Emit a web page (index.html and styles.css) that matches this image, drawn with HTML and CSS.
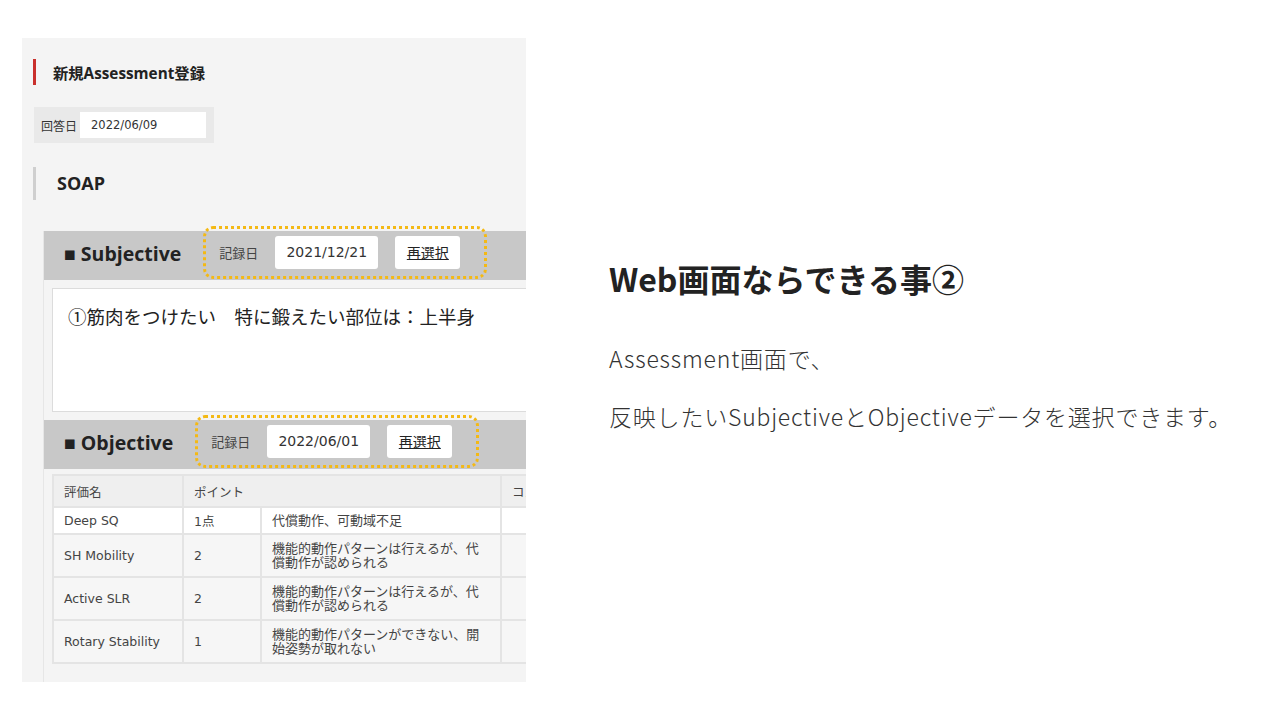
FILE: index.html
```html
<!DOCTYPE html>
<html lang="ja">
<head>
  <meta charset="UTF-8">
  <title>Web画面ならできる事②</title>
  <link rel="stylesheet" href="styles.css">
</head>
<body>

  <!-- Screenshot of the assessment form -->
  <div class="shot">
    <div class="page-title">
      <span class="title-bar"></span>
      <span class="title-text">新規Assessment登録</span>
    </div>

    <div class="answer-date">
      <span class="answer-label">回答日</span>
      <span class="answer-input">2022/06/09</span>
    </div>

    <div class="soap-title">SOAP</div>

    <div class="soap-body">
      <!-- Subjective -->
      <div class="section-head">
        <div class="section-name">■ Subjective</div>
        <div class="pick-box">
          <span class="pick-label">記録日</span>
          <span class="pick-input">2021/12/21</span>
          <span class="pick-button">再選択</span>
        </div>
      </div>
      <div class="subjective-text">①筋肉をつけたい　特に鍛えたい部位は：上半身</div>

      <!-- Objective -->
      <div class="section-head">
        <div class="section-name">■ Objective</div>
        <div class="pick-box">
          <span class="pick-label">記録日</span>
          <span class="pick-input">2022/06/01</span>
          <span class="pick-button">再選択</span>
        </div>
      </div>
      <table class="eval-table">
        <tr class="head-row">
          <td class="col-name">評価名</td>
          <td colspan="2">ポイント</td>
          <td class="col-note">コメント</td>
        </tr>
        <tr class="row-short">
          <td>Deep SQ</td>
          <td class="col-point">1点</td>
          <td class="col-desc">代償動作、可動域不足</td>
          <td></td>
        </tr>
        <tr class="row-gray">
          <td>SH Mobility</td>
          <td>2</td>
          <td class="col-desc">機能的動作パターンは行えるが、代償動作が認められる</td>
          <td></td>
        </tr>
        <tr class="row-gray">
          <td>Active SLR</td>
          <td>2</td>
          <td class="col-desc">機能的動作パターンは行えるが、代償動作が認められる</td>
          <td></td>
        </tr>
        <tr class="row-gray">
          <td>Rotary Stability</td>
          <td>1</td>
          <td class="col-desc">機能的動作パターンができない、開始姿勢が取れない</td>
          <td></td>
        </tr>
      </table>
    </div>
  </div>

  <!-- Slide text -->
  <div class="slide-text">
    <h1>Web画面ならできる事②</h1>
    <p>Assessment画面で、</p>
    <p>反映したいSubjectiveとObjectiveデータを選択できます。</p>
  </div>

</body>
</html>
```

FILE: styles.css
```css
/* Slide canvas */
body {
  margin: 0;
  width: 1280px;
  height: 720px;
  background-color: white;
  color: #222;
  font-family: "Noto Sans CJK JP", sans-serif;
  display: flex;
  align-items: flex-start;
  overflow: hidden;
}

/* Screenshot panel */
.shot {
  margin: 38px 0 0 22px;
  width: 504px;
  height: 644px;
  background-color: #f4f4f4;
  overflow: hidden;
  flex-shrink: 0;
  color: #333;
  font-family: "DejaVu Sans", "Noto Sans CJK JP", sans-serif;
}

/* Page title with red bar */
.page-title {
  display: flex;
  align-items: center;
  margin: 21px 0 0 11px;
  height: 26px;
}

.title-bar {
  width: 3px;
  height: 26px;
  background-color: #c9302c;
}

.title-text {
  margin-left: 17px;
  font-family: "Open Sans", "Noto Sans CJK JP", sans-serif;
  font-size: 15.3px;
  font-weight: bold;
  color: #222;
}

/* Answer date */
.answer-date {
  display: flex;
  align-items: center;
  margin: 22px 0 0 12px;
  width: 180px;
  height: 36px;
  padding: 0 8px 0 7px;
  box-sizing: border-box;
  background-color: #e9e9e9;
}

.answer-label {
  font-family: "Noto Sans CJK JP", sans-serif;
  font-size: 12px;
  color: #333;
}

.answer-input {
  margin-left: 3px;
  width: 126px;
  height: 26px;
  line-height: 26px;
  padding-left: 11px;
  box-sizing: border-box;
  background-color: white;
  font-size: 11.5px;
}

/* SOAP heading */
.soap-title {
  margin: 24px 0 0 11px;
  height: 33px;
  line-height: 33px;
  border-left: 3px solid #cfcfcf;
  padding-left: 21px;
  font-family: "Open Sans", sans-serif;
  font-size: 18px;
  font-weight: bold;
  color: #222;
}

/* SOAP body */
.soap-body {
  margin: 31px 0 0 21px;
  width: 720px;
  min-height: 460px;
  border-left: 1px solid #e6e6e6;
}

.section-head {
  display: flex;
  align-items: flex-start;
  height: 49px;
  background-color: #c8c8c8;
}

.section-name {
  padding-left: 20px;
  line-height: 46px;
  font-family: "Open Sans", sans-serif;
  font-size: 19.5px;
  font-weight: bold;
  color: #222;
}

.pick-box {
  display: flex;
  align-items: center;
  margin: -5px 0 0 22px;
  width: 284px;
  height: 53px;
  padding-left: 13px;
  box-sizing: border-box;
  border: 3px dotted #f4b914;
  border-radius: 10px;
}

.pick-label {
  font-family: "Noto Sans CJK JP", sans-serif;
  font-size: 13px;
  color: #444;
}

.pick-input {
  margin-left: 17px;
  width: 103px;
  height: 33px;
  line-height: 33px;
  text-align: center;
  background-color: white;
  border-radius: 3px;
  font-size: 14px;
  color: #333;
}

.pick-button {
  margin-left: 17px;
  width: 65px;
  height: 33px;
  line-height: 33px;
  text-align: center;
  background-color: white;
  border-radius: 3px;
  font-family: "Noto Sans CJK JP", sans-serif;
  font-size: 14px;
  text-decoration: underline;
  color: #222;
}

.subjective-text {
  margin: 8px 0 8px 8px;
  height: 124px;
  padding: 14px 15px;
  box-sizing: border-box;
  background-color: white;
  border: 1px solid #dcdcdc;
  font-family: "Noto Sans CJK JP", sans-serif;
  font-size: 18.5px;
  color: #222;
}

/* Objective table */
.eval-table {
  margin: 5px 0 0 8px;
  border-collapse: collapse;
  font-size: 12.5px;
  color: #444;
}

.eval-table td {
  border: 2px solid #e4e4e4;
  padding: 0 10px;
  vertical-align: middle;
}

.head-row td {
  height: 30px;
  background-color: #efefef;
}

.row-short td {
  height: 25px;
  background-color: white;
}

.row-gray td {
  height: 41px;
  background-color: #f6f6f6;
}

.col-name {
  width: 108px;
}

.col-point {
  width: 56px;
}

.col-desc {
  width: 218px;
  font-size: 13px;
  line-height: 14px;
}

.col-note {
  width: 150px;
}

/* Slide text on the right */
.slide-text {
  margin: 257px 0 0 83px;
}

.slide-text h1 {
  margin: 0;
  font-size: 32px;
  line-height: 42px;
  font-weight: bold;
  color: #222;
}

.slide-text p {
  margin: 45px 0 0;
  font-size: 23px;
  line-height: 28px;
  font-weight: 300;
  letter-spacing: 0.8px;
  color: #333;
}

.slide-text p + p {
  margin-top: 30px;
}
```
